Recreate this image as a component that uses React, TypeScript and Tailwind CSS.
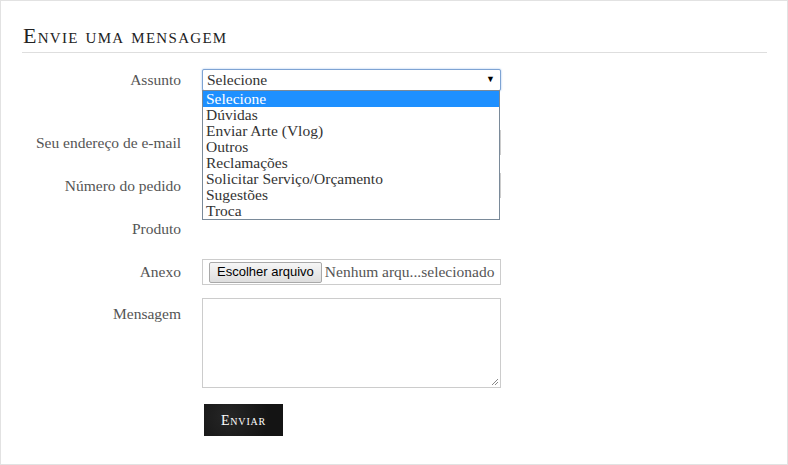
import React from "react";

const serif = { fontFamily: '"Liberation Serif", "Times New Roman", serif' };

const options = [
  "Selecione",
  "Dúvidas",
  "Enviar Arte (Vlog)",
  "Outros",
  "Reclamações",
  "Solicitar Serviço/Orçamento",
  "Sugestões",
  "Troca",
];

function Label({ children, top = false }: { children: React.ReactNode; top?: boolean }) {
  return (
    <div
      className={
        "w-[159px] shrink-0 text-right text-[15.5px] text-[#555] " +
        (top ? "pt-[7px] leading-[18px]" : "self-center leading-[18px]")
      }
    >
      {children}
    </div>
  );
}

export default function App() {
  return (
    <div
      className="relative box-border h-[465px] w-[788px] border border-[#e2e2e2] bg-white"
      style={serif}
    >
      <div className="pl-[21px] pr-[20px] pt-[24px]">
        <h2 className="border-b border-[#dedede] pb-[5px] pl-[1px] text-[22px] leading-[22px] tracking-[1.3px] text-[#222] [font-variant:small-caps]">
          Envie uma mensagem
        </h2>

        <div className="flex flex-col">
          {/* Assunto */}
          <div className="mt-[16px] flex h-[22px]">
            <Label>Assunto</Label>
            <div className="relative ml-[21px] w-[299px]">
              <div className="flex h-[22px] items-center justify-between rounded-[2px] border border-[#7ea3d3] bg-white pl-[4px] pr-[5px] text-[15.5px] text-[#333] shadow-[0_0_2px_rgba(80,140,220,0.6)]">
                <span>Selecione</span>
                <span className="text-[9px] text-black">▼</span>
              </div>
              <ul className="absolute left-0 top-[21px] z-10 w-[298px] border border-[#7a8a99] bg-white text-[15.5px] leading-[16px] text-[#333]">
                {options.map((o, i) => (
                  <li
                    key={o}
                    className={
                      "h-[16px] pl-[3px] " + (i === 0 ? "bg-[#1e90ff] text-white" : "")
                    }
                  >
                    {o}
                  </li>
                ))}
              </ul>
            </div>
          </div>

          {/* Email */}
          <div className="mt-[39px] flex h-[25px]">
            <Label>Seu endereço de e-mail</Label>
            <div className="ml-[21px] h-[25px] w-[299px] border border-[#ccc]" />
          </div>

          {/* Pedido */}
          <div className="mt-[18px] flex h-[25px]">
            <Label>Número do pedido</Label>
            <div className="ml-[21px] h-[25px] w-[299px] border border-[#ccc]" />
          </div>

          {/* Produto */}
          <div className="mt-[18px] flex h-[25px]">
            <Label>Produto</Label>
            <div className="ml-[21px] w-[299px]" />
          </div>

          {/* Anexo */}
          <div className="mt-[18px] flex h-[26px]">
            <Label>Anexo</Label>
            <div className="ml-[21px] flex h-[26px] w-[299px] items-center border border-[#ccc] pl-[6px]">
              <span
                className="flex h-[21px] items-center rounded-[2px] border border-[#a9a9a9] bg-gradient-to-b from-[#f6f6f6] to-[#dedede] px-[7px] text-[13px] text-black"
                style={{ fontFamily: '"Liberation Sans", Arial, sans-serif' }}
              >
                Escolher arquivo
              </span>
              <span className="ml-[3px] whitespace-nowrap text-[15.5px] text-[#555]">
                Nenhum arqu...selecionado
              </span>
            </div>
          </div>

          {/* Mensagem */}
          <div className="mt-[13px] flex">
            <Label top>Mensagem</Label>
            <div className="relative ml-[21px] h-[90px] w-[299px] border border-[#ccc]">
              <svg
                className="absolute bottom-[1px] right-[1px]"
                width="9"
                height="9"
                viewBox="0 0 9 9"
              >
                <path d="M8 2 L2 8 M8 5 L5 8" stroke="#888" strokeWidth="1" fill="none" />
              </svg>
            </div>
          </div>

          {/* Enviar */}
          <div className="mt-[16px] flex">
            <div className="w-[159px] shrink-0" />
            <button
              className="ml-[23px] h-[32px] w-[79px] bg-[#181818] bg-[radial-gradient(circle_at_30%_40%,#262626_0,#141414_70%)] text-[14px] tracking-[0.8px] text-white [font-variant:small-caps]"
              style={serif}
            >
              Enviar
            </button>
          </div>
        </div>
      </div>
    </div>
  );
}
